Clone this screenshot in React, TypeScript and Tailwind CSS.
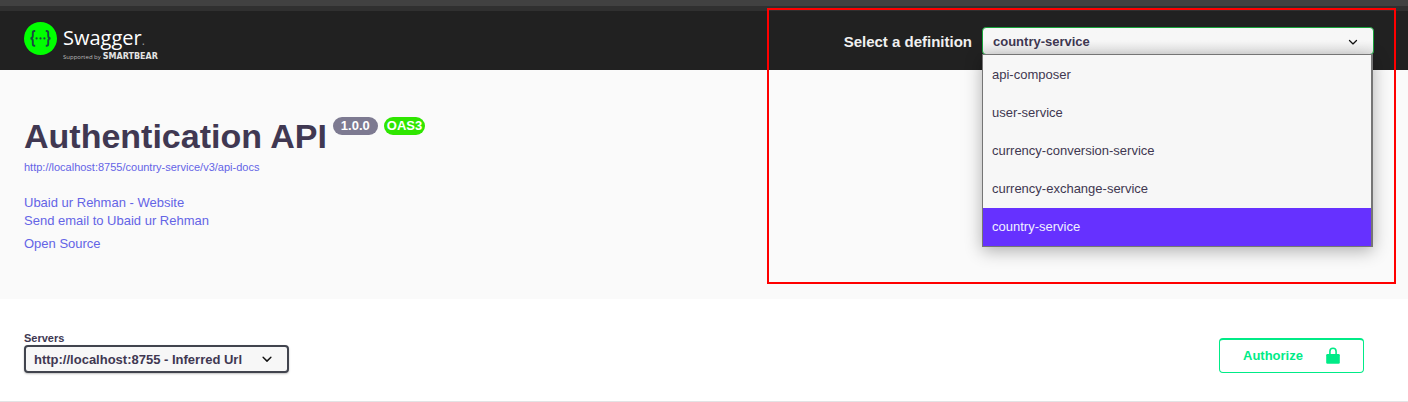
import { useState } from "react";

const definitions = [
  "api-composer",
  "user-service",
  "currency-conversion-service",
  "currency-exchange-service",
  "country-service",
];

function Chevron({ className }: { className: string }) {
  return (
    <svg viewBox="0 0 20 20" className={className} aria-hidden="true">
      <path
        fill="#111"
        d="M13.418 7.859a.695.695 0 0 1 .978 0 .68.68 0 0 1 0 .969l-3.908 3.83a.697.697 0 0 1-.979 0l-3.908-3.83a.68.68 0 0 1 0-.969.695.695 0 0 1 .978 0L10 11z"
      />
    </svg>
  );
}

function Logo() {
  return (
    <a href="#" className="flex items-start gap-1.5 text-white">
      <svg viewBox="0 0 33 33" className="size-[33px]" aria-hidden="true">
        <circle cx="16.5" cy="16.5" r="16.5" fill="#0f0" />
        <g fill="none" stroke="#17483f" strokeWidth="1.9">
          <path d="M11.2 9H10.4Q8.8 9 8.8 10.8V13.8Q8.8 16.4 6.4 16.4Q8.8 16.4 8.8 19V22Q8.8 23.8 10.4 23.8H11.2" />
          <path d="M21.8 9H22.6Q24.2 9 24.2 10.8V13.8Q24.2 16.4 26.6 16.4Q24.2 16.4 24.2 19V22Q24.2 23.8 22.6 23.8H21.8" />
        </g>
        <g fill="#17483f">
          <circle cx="12.6" cy="16.4" r="1.1" />
          <circle cx="16.5" cy="16.4" r="1.1" />
          <circle cx="20.4" cy="16.4" r="1.1" />
        </g>
      </svg>
      <span className="flex flex-col gap-[3px] pt-1 font-['Open_Sans',sans-serif]">
        <span className="text-xl leading-6 font-normal">
          Swagger<span className="text-xs text-[#999]">.</span>
        </span>
        <span className="flex h-2 items-center gap-0.5 text-[6px] leading-[8px] whitespace-nowrap">
          <span className="text-[#bbb]">Supported by</span>
          <span className="font-['DejaVu_Sans',sans-serif] text-[8px] font-bold text-[#e4e4e4]">
            SMARTBEAR
          </span>
        </span>
      </span>
    </a>
  );
}

function DefinitionPicker() {
  const [value, setValue] = useState("country-service");
  const [open, setOpen] = useState(true);
  return (
    <div className="flex items-center gap-2.5">
      <label htmlFor="definition" className="pt-0.5 text-[15px] font-bold text-[#f0f0f0]">
        Select a definition
      </label>
      <div className="relative w-[392px]">
        <select
          id="definition"
          value={value}
          onChange={(e) => setValue(e.target.value)}
          onMouseDown={(e) => {
            e.preventDefault();
            setOpen(!open);
          }}
          className="block h-7 w-full appearance-none rounded border border-[#16a33a] bg-[#f7f7f7] bg-linear-to-b from-[#f7f7f7] from-50% to-[#e6e6e6] pt-0.5 pr-10 pl-2.5 text-[13px] font-bold text-[#403852] outline-none"
        >
          {definitions.map((d) => (
            <option key={d}>{d}</option>
          ))}
        </select>
        <Chevron className="pointer-events-none absolute top-1.5 right-3 size-[18px]" />
        {open && (
          <ul
            role="listbox"
            aria-label="Definitions"
            className="absolute top-[27px] left-0 z-10 w-[391px] border border-r-2 border-[#757575] bg-[#f7f7f7] pt-px text-[13px] text-[#3f3851] shadow-[0_4px_16px_rgba(0,0,0,0.3)]"
          >
            {definitions.map((d) => (
              <li
                key={d}
                role="option"
                aria-selected={d === value}
                onClick={() => {
                  setValue(d);
                  setOpen(false);
                }}
                className={
                  d === value
                    ? "flex h-[38px] items-center bg-[#6631ff] px-[9px] text-[#f0f0ff]"
                    : "flex h-[38px] items-center px-[9px]"
                }
              >
                {d}
              </li>
            ))}
          </ul>
        )}
      </div>
    </div>
  );
}

export default function App() {
  return (
    <div className="relative bg-white font-['Liberation_Sans',Arial,sans-serif] text-[#403852]">
      <div className="h-1.5 bg-[#414141]" />
      <div className="h-[5px] bg-[#303030]" />
      <header className="flex h-[59px] items-start justify-between bg-[#212121] pr-[34px] pl-6">
        <div className="pt-[11px]">
          <Logo />
        </div>
        <div className="pt-4">
          <DefinitionPicker />
        </div>
      </header>

      <main>
        <section className="bg-[#fafafa] px-6 pt-[47px] pb-[46px]">
          <div className="flex items-start gap-1.5">
            <h1 className="text-[34px] leading-[38px] font-bold">Authentication API</h1>
            <span className="flex h-[18px] items-center rounded-full bg-[#7d7a91] px-2 text-[13px] font-bold text-white">
              1.0.0
            </span>
            <span className="flex h-[18px] items-center rounded-full bg-[#2fe600] px-[3px] text-[13px] font-bold text-white">
              OAS3
            </span>
          </div>
          <div className="flex flex-col items-start text-[13px] leading-[18px] text-[#6464e6]">
            <a href="#api-docs" className="mt-[3px] text-[11px]">
              http://localhost:8755/country-service/v3/api-docs
            </a>
            <a href="#website" className="mt-[18px]">
              Ubaid ur Rehman - Website
            </a>
            <a href="#email">Send email to Ubaid ur Rehman</a>
            <a href="#license" className="mt-[5px]">
              Open Source
            </a>
          </div>
        </section>

        <section className="flex items-start justify-between border-b border-[#e3e3e5] pt-8 pr-11 pb-7 pl-6">
          <div className="flex flex-col">
            <label htmlFor="servers" className="text-[11px] leading-[14px] font-bold">
              Servers
            </label>
            <div className="relative w-[265px]">
              <select
                id="servers"
                className="block h-7 w-full appearance-none rounded border-2 border-[#41444e] bg-[#f7f7f7] pt-0.5 pr-8 pl-2 text-[13px] font-bold shadow-[0_1px_2px_rgba(0,0,0,0.25)]"
              >
                <option>http://localhost:8755 - Inferred Url</option>
              </select>
              <Chevron className="pointer-events-none absolute top-1 right-3 size-5" />
            </div>
          </div>
          <button
            type="button"
            className="mt-[7px] flex h-[35px] w-[145px] items-center justify-between rounded border border-t-2 border-[#00eb87] bg-white pr-[22px] pl-[23px] text-[13px] font-bold text-[#00eb87]"
          >
            Authorize
            <svg viewBox="0 0 16 18" className="h-[18px] w-4" aria-hidden="true">
              <path d="M4.9 8V4.4Q4.9 1.2 8 1.2T11.1 4.4V8" fill="none" stroke="#00eb87" strokeWidth="1.6" />
              <rect x="1.2" y="7" width="13.6" height="9.8" rx="1.2" fill="#00eb87" />
            </svg>
          </button>
        </section>
      </main>

      <div className="pointer-events-none absolute top-2 right-3 z-20 h-[276px] w-[629px] border-2 border-[#ff0000]" />
    </div>
  );
}
